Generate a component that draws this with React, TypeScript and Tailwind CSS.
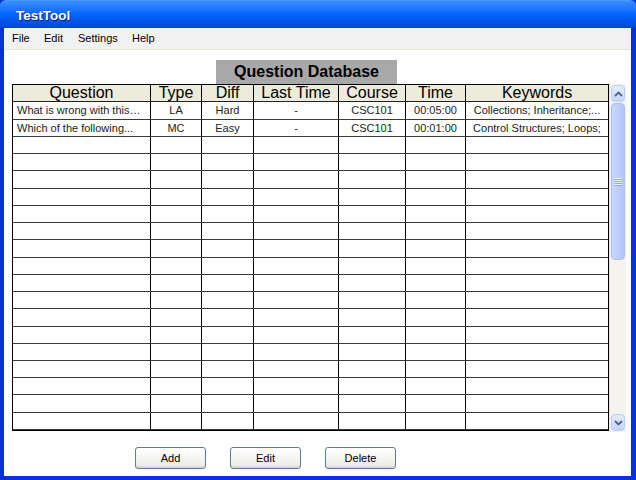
const columns = [
  { name: 'Question', w: 'w-[138px]' },
  { name: 'Type', w: 'w-[51px]' },
  { name: 'Diff', w: 'w-[52px]' },
  { name: 'Last Time', w: 'w-[85px]' },
  { name: 'Course', w: 'w-[67px]' },
  { name: 'Time', w: 'w-[60px]' },
  { name: 'Keywords', w: 'flex-1' },
]

const rows: string[][] = [
  ['What is wrong with this…', 'LA', 'Hard', '-', 'CSC101', '00:05:00', 'Collections; Inheritance;...'],
  ['Which of the following...', 'MC', 'Easy', '-', 'CSC101', '00:01:00', 'Control Structures; Loops;'],
]

const EMPTY_ROWS = 17

function Row({ cells, header }: { cells: string[]; header?: boolean }) {
  return (
    <div
      className={`flex h-[17.35px] border-b ${
        header ? 'bg-[#ecebdc] border-[#222]' : 'bg-white border-[#3a3a3a]'
      }`}
    >
      {columns.map((c, i) => {
        const align = header ? 'justify-center' : i === 0 ? 'justify-start pl-1' : 'justify-center'
        const text = header ? 'text-[16px] leading-none text-black' : 'text-[11px] text-[#222]'
        const edge = i < columns.length - 1 ? 'border-r border-black' : ''
        return (
          <div key={c.name} className={`${c.w} flex items-center overflow-hidden whitespace-nowrap ${align} ${text} ${edge}`}>
            {header ? c.name : cells[i]}
          </div>
        )
      })}
    </div>
  )
}

function Scrollbar() {
  return (
    <div className="w-[17px] h-[348px] flex flex-col bg-[#f4f3ee] border-l border-[#e8e8e0]">
      <div className="h-[17px] m-px rounded-sm bg-gradient-to-b from-[#e6eefc] to-[#c3d3fd] border border-[#b8cdf8] flex items-center justify-center">
        <svg width="9" height="6" viewBox="0 0 9 6">
          <path d="M1 5 L4.5 1.5 L8 5" fill="none" stroke="#4d6185" strokeWidth="1.8" />
        </svg>
      </div>
      <div className="h-[157px] mx-px rounded-sm bg-gradient-to-r from-[#c9d8fc] via-[#bccdfb] to-[#b2c6f8] border border-[#a9bff2] flex items-center justify-center">
        <div className="flex flex-col gap-[1px]">
          {[0, 1, 2, 3].map((i) => (
            <div key={i} className="w-[7px] h-[1px] bg-[#eef3ff] shadow-[0_1px_0_#8ca6e2]" />
          ))}
        </div>
      </div>
      <div className="flex-1" />
      <div className="h-[17px] m-px rounded-sm bg-gradient-to-b from-[#e6eefc] to-[#c3d3fd] border border-[#b8cdf8] flex items-center justify-center">
        <svg width="9" height="6" viewBox="0 0 9 6">
          <path d="M1 1 L4.5 4.5 L8 1" fill="none" stroke="#4d6185" strokeWidth="1.8" />
        </svg>
      </div>
    </div>
  )
}

function Button({ label }: { label: string }) {
  return (
    <button className="w-[71px] h-[22px] rounded-[3px] border border-[#5a7ca6] bg-gradient-to-b from-white to-[#ebeae4] text-[11px] text-black shadow-[inset_0_-2px_0_#dcd9cf]">
      {label}
    </button>
  )
}

export default function App() {
  return (
    <div
      className="w-[636px] h-[480px] flex flex-col bg-[#0831d9]"
      style={{ fontFamily: '"Liberation Sans", Arial, sans-serif' }}
    >
      <div className="h-[28px] flex items-center pl-[16px] pt-[4px] rounded-t-md bg-gradient-to-b from-[#3a8cff] via-[#0066ff] to-[#0045d4] border-t border-[#4a9bff]">
        <span className="text-white font-bold text-[13.5px] [text-shadow:1px_1px_0_#0a1e78]">TestTool</span>
      </div>
      <div className="flex-1 flex flex-col mx-[4px] mr-[5px] mb-[4px] bg-white">
        <div className="h-[22px] flex items-center pl-[8px] bg-[#f1f1f1] border-b border-[#ebe5d5] text-[11px] text-black">
          <span className="w-[32px]">File</span>
          <span className="w-[34px]">Edit</span>
          <span className="w-[54px]">Settings</span>
          <span>Help</span>
        </div>
        <div className="flex flex-col pl-[8px] pt-[10px]">
          <div className="self-start ml-[204px] w-[181px] h-[24px] bg-[#a8a8a8] flex items-center justify-center font-bold text-[16px] text-black">
            Question Database
          </div>
          <div className="flex">
            <div className="w-[597px] h-[347px] border border-black flex flex-col">
              <Row cells={[]} header />
              {rows.map((r, i) => (
                <Row key={i} cells={r} />
              ))}
              {Array.from({ length: EMPTY_ROWS }).map((_, i) => (
                <Row key={`e${i}`} cells={['', '', '', '', '', '', '']} />
              ))}
            </div>
            <Scrollbar />
          </div>
          <div className="flex gap-[24px] pl-[123px] pt-[15px]">
            <Button label="Add" />
            <Button label="Edit" />
            <Button label="Delete" />
          </div>
        </div>
      </div>
    </div>
  )
}
